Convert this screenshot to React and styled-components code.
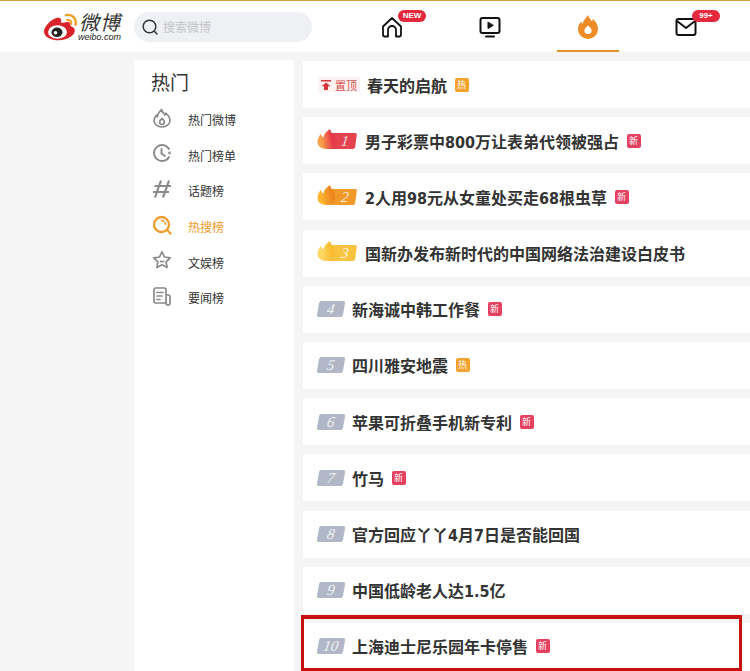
import styled, { createGlobalStyle } from "styled-components";

const rows = [
  { rank: "pin", title: "春天的启航", tag: "hot" },
  { rank: 1, title: "男子彩票中800万让表弟代领被强占", tag: "new" },
  { rank: 2, title: "2人用98元从女童处买走68根虫草", tag: "new" },
  { rank: 3, title: "国新办发布新时代的中国网络法治建设白皮书" },
  { rank: 4, title: "新海诚中韩工作餐", tag: "new" },
  { rank: 5, title: "四川雅安地震", tag: "hot" },
  { rank: 6, title: "苹果可折叠手机新专利", tag: "new" },
  { rank: 7, title: "竹马", tag: "new" },
  { rank: 8, title: "官方回应丫丫4月7日是否能回国" },
  { rank: 9, title: "中国低龄老人达1.5亿" },
  { rank: 10, title: "上海迪士尼乐园年卡停售", tag: "new", marked: true },
];

const topColors = {
  1: { flameLeft: "#f7a04a", flameRight: "#e8394a", bar: "#e5424f" },
  2: { flameLeft: "#fbb52f", flameRight: "#f0841f", bar: "#f09a2a" },
  3: { flameLeft: "#fdd865", flameRight: "#f8bb2e", bar: "#f8c33f" },
};

const FireSmall = () => (
  <svg width="20" height="20" viewBox="0 0 20 20" fill="none" stroke="#8a8a8a" strokeWidth="1.700" strokeLinejoin="round">
    <path d="M9.500 1.500c.5 3 2.500 3.500 3.500 5.500.5-.6.8-1.200.8-1.800C16.500 7.500 18 10 18 12.500A8 6.500 0 0 1 2 12.500c0-2.500 1.300-4 2.500-5.300.2.800.5 1.300 1 1.700C5.300 6 7.500 3.500 9.500 1.500z" />
    <path d="M10 10.500c1.500 1.200 2.400 2.500 2.400 3.600a2.400 2.400 0 0 1-4.800 0c0-1.100.9-2.400 2.400-3.600z" />
  </svg>
);

const ClockIcon = () => (
  <svg width="20" height="20" viewBox="0 0 20 20" fill="none" stroke="#8a8a8a" strokeWidth="1.900" strokeLinecap="round">
    <path d="M17 14a8 8 0 1 1 0-8" />
    <path d="M9.500 6v4.500l3.500 2.500" />
    <circle cx="17.500" cy="10" r=".5" />
  </svg>
);

const HashIcon = () => (
  <svg width="20" height="20" viewBox="0 0 20 20" fill="none" stroke="#8a8a8a" strokeWidth="2.200">
    <path d="M9 1.500 3 18.500M17 1.500l-6 17M2.500 7H19M1 13h16" />
  </svg>
);

const SearchHot = () => (
  <svg width="20" height="20" viewBox="0 0 20 20" fill="none" stroke="#f09a2a" strokeWidth="2.300" strokeLinecap="round">
    <circle cx="9.500" cy="9.500" r="7.500" />
    <path d="M15 15l3.500 3.500" />
    <path d="M9.500 5.500a4 4 0 0 1 4 4" strokeWidth="1.500" />
  </svg>
);

const StarIcon = () => (
  <svg width="20" height="20" viewBox="0 0 20 20" fill="none" stroke="#8a8a8a" strokeWidth="1.700" strokeLinejoin="round">
    <path d="M10 1.800l2.500 5.200 5.700.8-4.100 4 1 5.700-5.100-2.700-5.100 2.700 1-5.700-4.100-4 5.700-.8z" />
    <path d="M7.800 11.500h4.400" />
  </svg>
);

const NewsIcon = () => (
  <svg width="20" height="20" viewBox="0 0 20 20" fill="none" stroke="#8a8a8a" strokeWidth="1.700" strokeLinecap="round" strokeLinejoin="round">
    <path d="M14 17H3.500A1.500 1.500 0 0 1 2 15.500v-12A1.500 1.500 0 0 1 3.500 2h9A1.500 1.500 0 0 1 14 3.500V17a2 2 0 0 0 4 0v-6.500A1.500 1.500 0 0 0 16.500 9H14" />
    <path d="M5 6.500h6M5 10h5M5 13.500h3" />
  </svg>
);

const sideItems = [
  { label: "热门微博", icon: <FireSmall /> },
  { label: "热门榜单", icon: <ClockIcon /> },
  { label: "话题榜", icon: <HashIcon /> },
  { label: "热搜榜", icon: <SearchHot />, active: true },
  { label: "文娱榜", icon: <StarIcon /> },
  { label: "要闻榜", icon: <NewsIcon /> },
];

const Logo = () => (
  <svg width="36" height="28" viewBox="0 0 36 28">
    <path
      d="M22 9.500c3-1 5.500-.5 5.500 2 0 1-.3 1.500.5 1.800 3 1 4.500 3 3.500 6-1.500 4-8 8-15.500 8C8 27.300 1 24 1 18.500 1 13.500 8 6.500 13.500 5c4-1 5.500 1.500 4.500 5 2-.3 3-.4 4-.5z"
      fill="#d9222a"
    />
    <ellipse cx="14.500" cy="19" rx="9.500" ry="6.800" fill="#fff" />
    <ellipse cx="14" cy="19.300" rx="5.500" ry="4.800" fill="#222" />
    <circle cx="12.500" cy="19.800" r="1.800" fill="#fff" />
    <path d="M23 2.200c6-1.500 11 3.500 9.500 9.500" fill="none" stroke="#f0a020" strokeWidth="2.400" strokeLinecap="round" />
    <path d="M24 7c3-.6 4.800 1.400 4.200 4" fill="none" stroke="#f0a020" strokeWidth="2" strokeLinecap="round" />
  </svg>
);

const SearchIcon = () => (
  <svg width="18" height="18" viewBox="0 0 18 18" fill="none" stroke="#333" strokeWidth="1.500" strokeLinecap="round">
    <circle cx="8.500" cy="8.500" r="6.300" />
    <path d="M13.300 13.300l2.700 2.700" />
  </svg>
);

const HomeIcon = () => (
  <svg width="22" height="22" viewBox="0 0 22 22" fill="none" stroke="#111" strokeWidth="1.800" strokeLinejoin="round" strokeLinecap="round">
    <path d="M2 10.500 11 2l9 8.500V19a1.500 1.500 0 0 1-1.500 1.500H15V14a4 4 0 0 0-8 0v6.500H3.500A1.500 1.500 0 0 1 2 19z" />
  </svg>
);

const VideoIcon = () => (
  <svg width="22" height="22" viewBox="0 0 22 22" fill="none" stroke="#111" strokeWidth="2" strokeLinecap="round">
    <rect x="1.500" y="2" width="19" height="15" rx="2" />
    <path d="M9 6.500v6l5-3z" fill="#111" strokeWidth="1" strokeLinejoin="round" />
    <path d="M7 20.500h8" />
  </svg>
);

const HotIcon = () => (
  <svg width="22" height="26" viewBox="0 0 22 26">
    <path
      d="M11 1c1 3.500 3 4.500 4 6.500.5-1 .8-1.800.8-2.800C19 7.500 21 11 21 15a10 10 0 0 1-20 0c0-3.500 1.800-5.500 3.200-7.500.3 1.300.8 2 1.600 2.500C5.800 7 8.500 4.500 11 1z"
      fill="#f08a24"
    />
    <path d="M11 11.500c2.500 2 3.600 3.500 3.600 5a3.600 3.600 0 0 1-7.200 0c0-1.500 1.100-3 3.600-5z" fill="#fff" />
  </svg>
);

const MailIcon = () => (
  <svg width="22" height="20" viewBox="0 0 22 20" fill="none" stroke="#111" strokeWidth="2" strokeLinejoin="round">
    <rect x="1.500" y="2" width="19" height="16" rx="2" />
    <path d="M2 4l9 7 9-7" />
  </svg>
);

const PinArrow = () => (
  <svg width="10" height="10" viewBox="0 0 10 10" fill="#d4373c">
    <path d="M0 0h10v1.600H0zM5 2.600l4.500 3.600H7V10H3V6.200H.5z" />
  </svg>
);

const Flame = ({ left, right, id }) => (
  <svg width="19" height="20" viewBox="0 0 19 20">
    <defs>
      <linearGradient id={id} x1="0" y1="0.600" x2="1" y2="0.400">
        <stop offset="0.200" stopColor={left} />
        <stop offset="0.800" stopColor={right} />
      </linearGradient>
    </defs>
    <path
      d="M13 0C13.500 3 17 6 18 10 19 15 15.500 20 9.500 20 4 20 .5 17 .5 12.800 .5 10 2 7 4 4.500 4 6.500 5 8 6.500 8.800 6.500 5.500 9.500 2.500 13 0z"
      fill={`url(#${id})`}
    />
  </svg>
);

const Rank = ({ value }) => {
  if (value === "pin") {
    return (
      <PinBadge>
        <PinArrow />
        置顶
      </PinBadge>
    );
  }
  if (value <= 3) {
    const colors = topColors[value];
    return (
      <TopRank>
        <TopBar $color={colors.bar}>
          <RankNumber>{value}</RankNumber>
        </TopBar>
        <FlameSlot>
          <Flame left={colors.flameLeft} right={colors.flameRight} id={`flame-${value}`} />
        </FlameSlot>
      </TopRank>
    );
  }
  return (
    <PlainRank>
      <RankNumber>{value}</RankNumber>
    </PlainRank>
  );
};

const App = () => {
  return (
    <>
      <GlobalStyle />
      <Header>
        <Brand>
          <Logo />
          <BrandText>
            <BrandName>微博</BrandName>
            <BrandUrl>weibo.com</BrandUrl>
          </BrandText>
        </Brand>
        <SearchBox>
          <SearchIcon />
          <SearchHint>搜索微博</SearchHint>
        </SearchBox>
        <Nav>
          <NavTab>
            <HomeIcon />
            <NavBadge>NEW</NavBadge>
          </NavTab>
          <NavTab>
            <VideoIcon />
          </NavTab>
          <NavTab $active>
            <HotIcon />
          </NavTab>
          <NavTab>
            <MailIcon />
            <NavBadge>99+</NavBadge>
          </NavTab>
        </Nav>
      </Header>
      <Page>
        <Sidebar>
          <SideTitle>热门</SideTitle>
          {sideItems.map((item) => (
            <SideItem key={item.label} $active={item.active}>
              <SideIcon>{item.icon}</SideIcon>
              {item.label}
            </SideItem>
          ))}
        </Sidebar>
        <List>
          {rows.map((row) => (
            <Row key={row.title} $marked={row.marked}>
              <Rank value={row.rank} />
              <Title>{row.title}</Title>
              {row.tag && <Tag $kind={row.tag}>{row.tag === "hot" ? "热" : "新"}</Tag>}
            </Row>
          ))}
        </List>
      </Page>
    </>
  );
};

const GlobalStyle = createGlobalStyle`
  html, body {
    margin: 0;
    height: 671px;
    overflow: hidden;
    background: #f5f5f5;
    font-family: "Noto Sans CJK SC", "Liberation Sans", sans-serif;
  }
`;

const Header = styled.header`
  display: flex;
  align-items: center;
  box-sizing: border-box;
  height: 52px;
  padding-left: 43px;
  background: #fff;
  border-top: 1px solid #d3a23c;
`;

const Brand = styled.div`
  display: flex;
  align-items: center;
  width: 91px;
  flex: none;
`;

const BrandText = styled.div`
  display: flex;
  flex-direction: column;
  align-items: flex-end;
  gap: 1px;
  margin-left: -1px;
`;

const BrandName = styled.span`
  font-size: 20px;
  font-style: italic;
  letter-spacing: 1px;
  color: #333;
  line-height: 20px;
  height: 20px;
`;

const BrandUrl = styled.span`
  font-family: "Liberation Sans", sans-serif;
  font-size: 9px;
  font-style: italic;
  color: #222;
  line-height: 9px;
  height: 9px;
`;

const SearchBox = styled.div`
  display: flex;
  align-items: center;
  gap: 4px;
  box-sizing: border-box;
  flex: none;
  width: 178px;
  height: 30px;
  padding-left: 7px;
  border-radius: 15px;
  background: #eef0f3;
`;

const SearchHint = styled.span`
  font-size: 12px;
  color: #c3c5c9;
`;

const Nav = styled.nav`
  display: flex;
  margin-left: 31px;
  align-self: stretch;
`;

const NavTab = styled.div`
  position: relative;
  display: flex;
  align-items: center;
  justify-content: center;
  width: 98px;

  ${(p) =>
    p.$active &&
    `
    &::after {
      content: "";
      position: absolute;
      left: 18px;
      right: 18px;
      bottom: 0;
      height: 2px;
      background: #e8912d;
    }
  `}
`;

const NavBadge = styled.span`
  position: absolute;
  left: 55px;
  top: 9px;
  width: 28px;
  height: 12px;
  border-radius: 6px;
  background: #e5283c;
  color: #fff;
  font-family: "Liberation Sans", sans-serif;
  font-size: 8px;
  font-weight: 700;
  line-height: 12px;
  text-align: center;
`;

const Page = styled.div`
  display: flex;
  align-items: stretch;
  gap: 9px;
  padding: 9px 0 0 134px;
  height: 610px;
`;

const Sidebar = styled.aside`
  flex: none;
  width: 160px;
  margin-top: -1px;
  background: #fff;
`;

const SideTitle = styled.h2`
  margin: 8px 0 7px 17px;
  font-size: 19px;
  font-weight: 400;
  line-height: 27px;
  color: #333;
`;

const SideItem = styled.div`
  display: flex;
  align-items: center;
  height: 35.6px;
  padding-left: 18px;
  font-size: 12px;
  color: ${(p) => (p.$active ? "#f09a2a" : "#333")};
`;

const SideIcon = styled.span`
  display: flex;
  width: 36px;
  margin-top: -4px;
`;

const List = styled.main`
  flex: 1;
  display: flex;
  flex-direction: column;
  gap: 9.2px;
  min-width: 0;
`;

const Row = styled.div`
  position: relative;
  flex: none;
  display: flex;
  align-items: center;
  height: 47px;
  padding-left: 15px;
  background: #fff;

  ${(p) =>
    p.$marked &&
    `
    &::after {
      content: "";
      position: absolute;
      left: -2px;
      top: -8px;
      width: 441px;
      height: 57px;
      box-sizing: border-box;
      border-style: solid;
      border-color: #c8110f;
      border-width: 4px 3px;
    }
  `}
`;

const Title = styled.span`
  font-family: "DejaVu Sans Condensed", "Inter", "Noto Sans CJK SC", sans-serif;
  font-size: 16px;
  font-weight: 700;
  color: #333;
  white-space: nowrap;
`;

const Tag = styled.span`
  display: flex;
  align-items: center;
  justify-content: center;
  flex: none;
  width: 14px;
  height: 14px;
  margin-left: 7.500px;
  border-radius: 2px;
  background: ${(p) => (p.$kind === "hot" ? "#f2a22c" : "#e4405f")};
  color: #fff;
  font-size: 9px;
  line-height: 14px;
`;

const PinBadge = styled.span`
  display: flex;
  align-items: center;
  gap: 4px;
  box-sizing: border-box;
  flex: none;
  width: 42px;
  height: 15px;
  margin-right: 7px;
  padding-left: 3px;
  background: #fdf1f1;
  color: #d9534f;
  font-size: 11px;
  white-space: nowrap;
`;

const TopRank = styled.span`
  position: relative;
  display: flex;
  align-items: center;
  justify-content: flex-end;
  flex: none;
  box-sizing: border-box;
  width: 47px;
  height: 20px;
  padding-right: 9px;
`;

const FlameSlot = styled.span`
  position: absolute;
  left: -1px;
  top: -2px;
  display: flex;
`;

const TopBar = styled.span`
  display: flex;
  align-items: center;
  justify-content: center;
  box-sizing: border-box;
  width: 28px;
  height: 16px;
  padding-left: 6px;
  border-radius: 2px;
  background: ${(p) => p.$color};
  transform: skewX(-8deg);
`;

const PlainRank = styled.span`
  display: flex;
  align-items: center;
  justify-content: center;
  flex: none;
  width: 26px;
  height: 16px;
  margin-right: 8px;
  border-radius: 2px;
  background: #b1b7c6;
  transform: skewX(-10deg);
`;

const RankNumber = styled.span`
  font-family: "Liberation Serif", serif;
  font-size: 15px;
  font-style: italic;
  color: rgba(255, 255, 255, 0.85);
  line-height: 16px;
`;

export default App;
